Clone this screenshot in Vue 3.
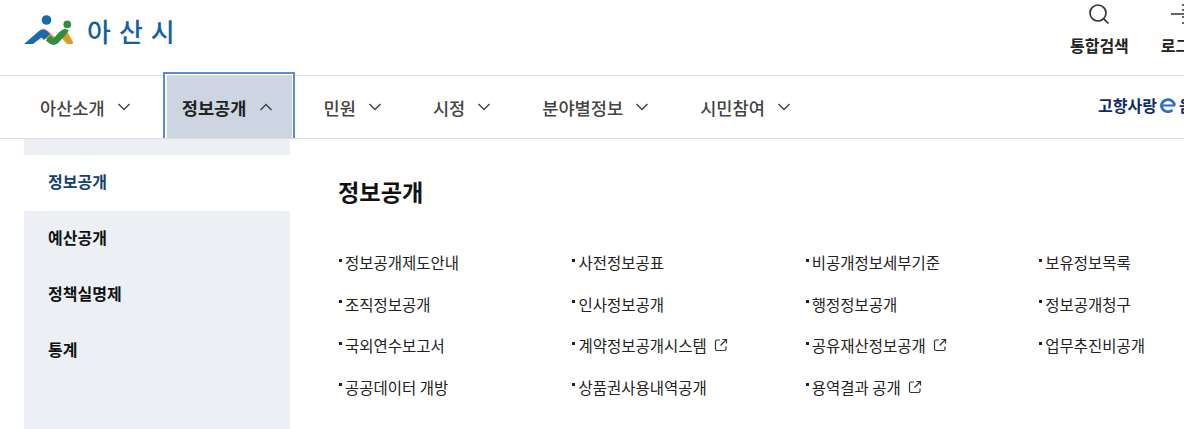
<template>
  <div class="page">
    <header class="top">
      <a class="logo">
        <svg class="logo-mark" width="52" height="34" viewBox="0 0 52 34" fill="none">
          <circle cx="22.5" cy="7" r="4.8" fill="#1b68ae" />
          <circle cx="43.3" cy="11.3" r="3.9" fill="#2f8f3e" />
          <path d="M18 17 Q21 15 24 18 L33 26 L27 30 L18 22 Z" fill="#e09b26" />
          <path d="M38 18 Q41 15.5 43 18 L49 29 Q49.5 31 47 31 L43 31 L36 23 Z" fill="#e09b26" />
          <path d="M0 31 L15 18 Q19 14.5 23 18 L26 21 L20 27 L17.5 24.5 L9 31 Z" fill="#1b68ae" />
          <path d="M24 25 L27.5 28 Q29.5 29.5 31.5 28 L38 21 Q40.5 18.5 43 20" stroke="#2f8f3e" stroke-width="6.5" />
        </svg>
        <span class="logo-text">아산시</span>
      </a>
      <div class="utils">
        <button class="util">
          <svg width="22" height="24" viewBox="0 0 22 24" fill="none" stroke="#333" stroke-width="1.7">
            <circle cx="10" cy="11" r="8" />
            <path d="M15.8 16.8 L20.5 21.5" />
          </svg>
          <span>통합검색</span>
        </button>
        <button class="util">
          <svg width="24" height="24" viewBox="0 0 24 24" fill="none" stroke="#333" stroke-width="1.6">
            <path d="M0 12 H22 M11 3 H14 M11 8 H14 M11 15 H14 M11 21 H14" />
          </svg>
          <span>로그인</span>
        </button>
      </div>
    </header>

    <nav class="gnb">
      <button v-for="m in menus" :key="m" class="gnb-item" :class="{ active: m === current }">
        <span>{{ m }}</span>
        <svg width="14" height="8" viewBox="0 0 14 8" fill="none" stroke="#444" stroke-width="1.5">
          <path v-if="m === current" d="M1.5 7 L7 1.5 L12.5 7" />
          <path v-else d="M1.5 1 L7 6.5 L12.5 1" />
        </svg>
      </button>
      <a class="love">
        고향사랑
        <svg width="16" height="15" viewBox="0 0 16 15" fill="none" stroke="#2f6fc6">
          <path d="M14.5 7.5 A6.5 6 0 1 0 12.5 12" stroke-width="2.8" />
          <path d="M2 7.5 H15" stroke-width="2.2" />
        </svg>
        음
      </a>
    </nav>

    <section class="panel">
      <aside class="side">
        <ul>
          <li v-for="s in sides" :key="s" :class="{ on: s === '정보공개' }">{{ s }}</li>
        </ul>
      </aside>
      <div class="content">
        <h2>정보공개</h2>
        <ul class="links">
          <li v-for="l in links" :key="l.t">
            <span class="dot"></span>
            <span>{{ l.t }}</span>
            <svg v-if="l.ext" class="ext" width="14" height="14" viewBox="0 0 14 14" fill="none" stroke="#333" stroke-width="1.2">
              <path d="M6 2 H3 Q1.5 2 1.5 3.5 V11 Q1.5 12.5 3 12.5 H10.5 Q12 12.5 12 11 V8.5" />
              <path d="M6.5 7.5 L12.5 1.5 M8.5 1.5 H12.5 V5.5" />
            </svg>
          </li>
        </ul>
      </div>
    </section>
  </div>
</template>

<script setup>
const current = '정보공개'
const menus = ['아산소개', '정보공개', '민원', '시정', '분야별정보', '시민참여']
const sides = ['정보공개', '예산공개', '정책실명제', '통계']
const links = [
  { t: '정보공개제도안내' },
  { t: '사전정보공표' },
  { t: '비공개정보세부기준' },
  { t: '보유정보목록' },
  { t: '조직정보공개' },
  { t: '인사정보공개' },
  { t: '행정정보공개' },
  { t: '정보공개청구' },
  { t: '국외연수보고서' },
  { t: '계약정보공개시스템', ext: true },
  { t: '공유재산정보공개', ext: true },
  { t: '업무추진비공개' },
  { t: '공공데이터 개방' },
  { t: '상품권사용내역공개' },
  { t: '용역결과 공개', ext: true }
]
</script>

<style>
html, body {
  margin: 0;
  overflow: hidden;
  background: #fff;
}
</style>

<style scoped>
.page {
  width: 1184px;
  height: 429px;
  overflow: hidden;
  font-family: "Noto Sans CJK KR", "Noto Sans", sans-serif;
  color: #111;
}
.top {
  height: 75px;
  display: flex;
  justify-content: space-between;
  width: 1300px;
  border-bottom: 1px solid #ddd;
}
.logo {
  display: flex;
  align-items: center;
  height: 60px;
  padding-left: 24px;
}
.logo-text {
  margin-left: 11px;
  font-size: 26px;
  font-weight: 500;
  letter-spacing: 8px;
  color: #15609f;
}
.utils {
  display: flex;
  gap: 32px;
  padding-right: 95px;
}
.util {
  border: 0;
  background: none;
  padding: 2px 0 0;
  font: inherit;
  font-size: 16px;
  font-weight: 700;
  color: #222;
  display: flex;
  flex-direction: column;
  align-items: center;
  white-space: nowrap;
}
.util span {
  margin-top: 7px;
  line-height: 24px;
}
.gnb {
  height: 62px;
  width: 1300px;
  padding-left: 21px;
  display: flex;
  gap: 10.5px;
  border-bottom: 1px solid #ddd;
  position: relative;
}
.gnb-item {
  position: relative;
  border: 0;
  background: none;
  font: inherit;
  font-size: 17.6px;
  font-weight: 500;
  color: #444;
  padding: 0 21.5px 0 19px;
  display: flex;
  align-items: center;
  gap: 12px;
  white-space: nowrap;
}
.gnb-item.active {
  background: #ccd5e1;
  color: #222;
  font-weight: 700;
}
.gnb-item.active::after {
  content: "";
  position: absolute;
  inset: -4px -1px 0 0;
  border: 2px solid #5b8ad6;
  border-bottom: 0;
  box-shadow: inset 2px 1px 0 #fff, inset -1px 0 0 #fff;
  pointer-events: none;
}
.love {
  position: absolute;
  left: 1098px;
  top: 17px;
  display: flex;
  align-items: center;
  gap: 3px;
  font-size: 16px;
  font-weight: 700;
  color: #0f2a6b;
  white-space: nowrap;
}
.panel {
  display: flex;
  padding-left: 24px;
}
.side {
  flex: none;
  width: 266px;
  height: 290px;
  background: #ecf0f4;
  padding-top: 16px;
  box-sizing: border-box;
}
.side ul {
  list-style: none;
  margin: 0;
  padding: 0;
}
.side li {
  height: 56px;
  line-height: 53px;
  padding-left: 24px;
  font-size: 16px;
  font-weight: 700;
}
.side li.on {
  background: #fff;
  color: #12406f;
}
.content {
  margin-left: 48px;
  flex: none;
}
.content h2 {
  margin: 35px 0 0;
  font-size: 23.2px;
  line-height: 34px;
  font-weight: 700;
}
.links {
  list-style: none;
  margin: 40px 0 0;
  padding: 0;
  display: grid;
  grid-template-columns: repeat(4, 233.4px);
  grid-auto-rows: 41.5px;
  font-size: 15.5px;
  color: #222;
}
.links li {
  display: flex;
  align-items: center;
  white-space: nowrap;
  height: 28px;
}
.dot {
  width: 3px;
  height: 3px;
  background: #222;
  margin-left: 1px;
  margin-right: 3px;
  margin-bottom: 4px;
}
.ext {
  margin-left: 7px;
}
</style>
